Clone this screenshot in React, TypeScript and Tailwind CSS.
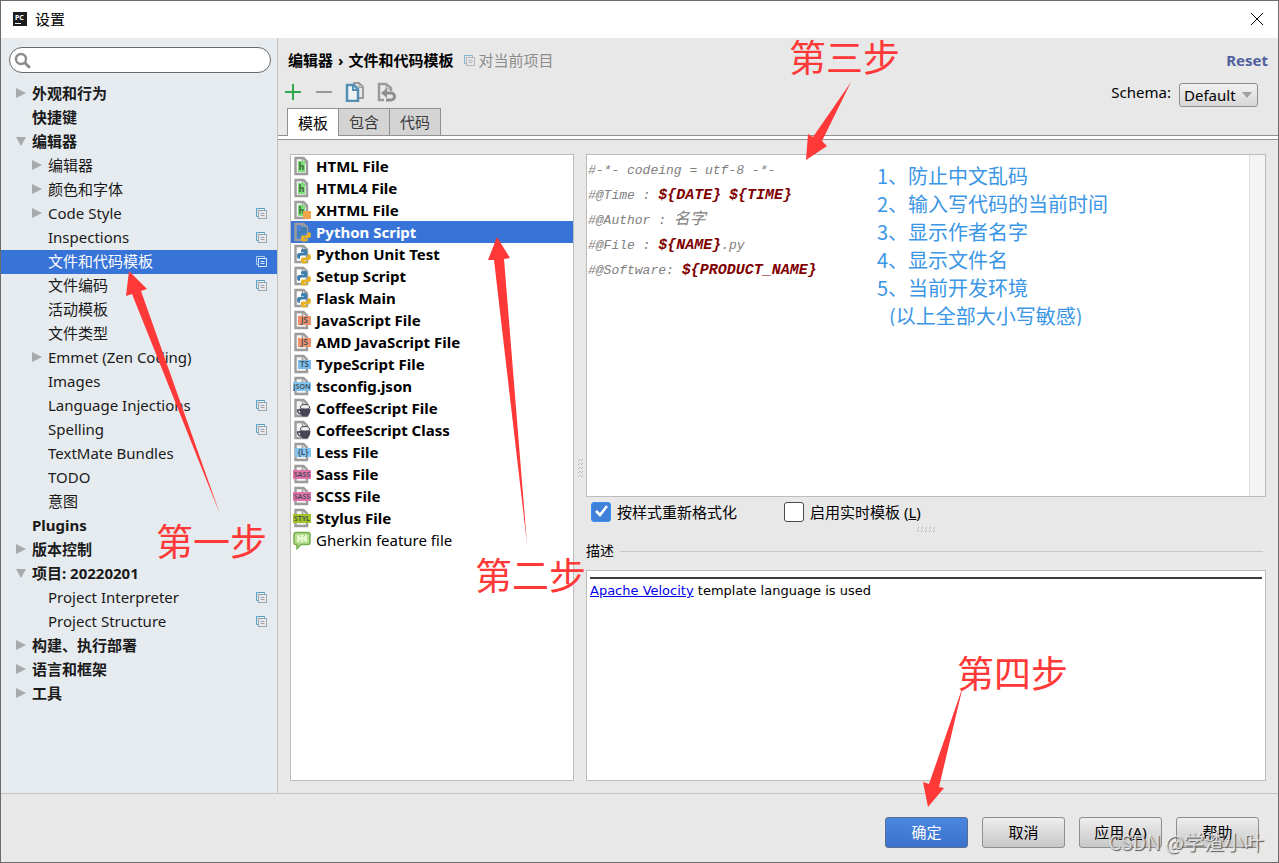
import type { ReactNode } from "react";
import { clsx } from "clsx";

type TreeItem = {
  label: string;
  level: 0 | 1;
  arrow?: "open" | "closed";
  bold?: boolean;
  project?: boolean;
  selected?: boolean;
};

const TREE: TreeItem[] = [
  { label: "外观和行为", level: 0, arrow: "closed", bold: true },
  { label: "快捷键", level: 0, bold: true },
  { label: "编辑器", level: 0, arrow: "open", bold: true },
  { label: "编辑器", level: 1, arrow: "closed" },
  { label: "颜色和字体", level: 1, arrow: "closed" },
  { label: "Code Style", level: 1, arrow: "closed", project: true },
  { label: "Inspections", level: 1, project: true },
  { label: "文件和代码模板", level: 1, project: true, selected: true },
  { label: "文件编码", level: 1, project: true },
  { label: "活动模板", level: 1 },
  { label: "文件类型", level: 1 },
  { label: "Emmet (Zen Coding)", level: 1, arrow: "closed" },
  { label: "Images", level: 1 },
  { label: "Language Injections", level: 1, project: true },
  { label: "Spelling", level: 1, project: true },
  { label: "TextMate Bundles", level: 1 },
  { label: "TODO", level: 1 },
  { label: "意图", level: 1 },
  { label: "Plugins", level: 0, bold: true },
  { label: "版本控制", level: 0, arrow: "closed", bold: true },
  { label: "项目: 20220201", level: 0, arrow: "open", bold: true },
  { label: "Project Interpreter", level: 1, project: true },
  { label: "Project Structure", level: 1, project: true },
  { label: "构建、执行部署", level: 0, arrow: "closed", bold: true },
  { label: "语言和框架", level: 0, arrow: "closed", bold: true },
  { label: "工具", level: 0, arrow: "closed", bold: true },
];

type FileKind =
  | "html"
  | "xhtml"
  | "python"
  | "js"
  | "ts"
  | "json"
  | "coffee"
  | "less"
  | "sass"
  | "styl"
  | "gherkin";

const TEMPLATES: { name: string; kind: FileKind }[] = [
  { name: "HTML File", kind: "html" },
  { name: "HTML4 File", kind: "html" },
  { name: "XHTML File", kind: "xhtml" },
  { name: "Python Script", kind: "python" },
  { name: "Python Unit Test", kind: "python" },
  { name: "Setup Script", kind: "python" },
  { name: "Flask Main", kind: "python" },
  { name: "JavaScript File", kind: "js" },
  { name: "AMD JavaScript File", kind: "js" },
  { name: "TypeScript File", kind: "ts" },
  { name: "tsconfig.json", kind: "json" },
  { name: "CoffeeScript File", kind: "coffee" },
  { name: "CoffeeScript Class", kind: "coffee" },
  { name: "Less File", kind: "less" },
  { name: "Sass File", kind: "sass" },
  { name: "SCSS File", kind: "sass" },
  { name: "Stylus File", kind: "styl" },
  { name: "Gherkin feature file", kind: "gherkin" },
];

export default function App() {
  return (
    <div className="relative flex h-screen flex-col overflow-hidden border border-[#6b6b6b] bg-[#e8e8e8] font-['Noto_Sans','Noto_Sans_CJK_SC',sans-serif] text-[15px] leading-5 text-black">
      <TitleBar />
      <div className="flex min-h-0 flex-1">
        <Sidebar />
        <MainPanel />
      </div>
      <Footer />
      <Annotations />
    </div>
  );
}

function TitleBar() {
  return (
    <header className="flex h-[37px] shrink-0 items-center bg-white pb-px pl-3 pr-[11px]">
      <svg width="14" height="14" viewBox="0 0 14 14" aria-hidden="true">
        <rect width="14" height="14" fill="#1d1d1d" />
        <text x="2" y="8" fontSize="7" fontWeight="700" fontFamily="Noto Sans" fill="#fff">
          PC
        </text>
        <path d="M2 11.5h6" stroke="#fff" />
      </svg>
      <h1 className="ml-2 text-[15px]">设置</h1>
      <button type="button" aria-label="关闭" className="ml-auto flex size-5 items-center justify-center">
        <svg width="12" height="12" viewBox="0 0 12 12" stroke="#000" aria-hidden="true">
          <path d="M0 0l12 12M12 0L0 12" />
        </svg>
      </button>
    </header>
  );
}

function Sidebar() {
  return (
    <nav className="flex w-[277px] shrink-0 flex-col border-r border-[#c3c3c3] bg-[#e6ebef]">
      <label className="mb-[9px] ml-2 mr-1.5 mt-[9px] flex h-[26px] items-center rounded-full border border-[#6a6a6a] bg-white pl-1">
        <svg width="17" height="17" viewBox="0 0 17 17" fill="none" stroke="#8c8c8c" aria-hidden="true">
          <circle cx="7" cy="7" r="5" strokeWidth="2.4" />
          <path d="M10.8 10.8l5 5" strokeWidth="3" />
        </svg>
        <input type="text" aria-label="搜索" className="min-w-0 flex-1 bg-transparent px-1 outline-none" />
      </label>
      <ul>
        {TREE.map((item, i) => (
          <TreeRow key={i} item={item} />
        ))}
      </ul>
    </nav>
  );
}

function TreeRow({ item }: { item: TreeItem }) {
  return (
    <li
      className={clsx(
        "flex h-6 items-center pb-0.5 pr-2.5",
        item.level === 0 ? "pl-[15px]" : "pl-[31px]",
        item.bold && "font-bold",
        item.selected ? "bg-[#3874d8] text-white" : "text-[#1a1a1a]",
      )}
    >
      <span className="w-4 shrink-0">
        {item.arrow && (
          <svg width="10" height="10" viewBox="0 0 10 10" fill="#a9a9a9" aria-hidden="true">
            <path d={item.arrow === "open" ? "M0 1h10L5 10z" : "M0 0l10 5-10 5z"} />
          </svg>
        )}
      </span>
      <span className="flex-1 whitespace-nowrap">{item.label}</span>
      {item.project && <ProjectIcon selected={item.selected} />}
    </li>
  );
}

function ProjectIcon({ selected }: { selected?: boolean }) {
  const back = selected ? "#a9cdf0" : "#5b9fc9";
  const front = selected ? "#dbe6f5" : "#a0a4a8";
  return (
    <svg width="11" height="11" viewBox="0 0 11 11" fill="none" aria-hidden="true">
      <path d="M2 8.500H.5v-8h8V2" stroke={back} />
      <rect x="2.500" y="2.500" width="8" height="8" stroke={front} />
      <path d="M4.500 5.500h4M4.500 7.500h4" stroke={front} />
    </svg>
  );
}

function MainPanel() {
  return (
    <main className="flex min-w-0 flex-1 flex-col">
      <div className="flex h-11 items-center pl-2.5 pr-2.5">
        <h2 className="flex gap-[5px] whitespace-nowrap font-bold">
          <span>编辑器</span>
          <span>›</span>
          <span>文件和代码模板</span>
        </h2>
        <span className="ml-2.5 mr-1 opacity-70">
          <ProjectIcon />
        </span>
        <span className="whitespace-nowrap text-[#8c8c8c]">对当前项目</span>
        <a href="#reset" className="ml-auto font-bold text-[#515f9f]">
          Reset
        </a>
      </div>
      <div className="flex h-[26px] items-start pr-5">
        <Toolbar />
        <label htmlFor="schema" className="ml-auto mr-2">
          Schema:
        </label>
        <div className="relative pt-px">
          <select
            id="schema"
            className="h-6 w-[79px] appearance-none rounded-[3px] border border-[#8e8e8e] bg-linear-to-b from-[#f2f2f2] to-[#d6d6d6] pl-1 text-[15px] leading-5"
          >
            <option>Default</option>
          </select>
          <svg className="pointer-events-none absolute right-1.5 top-2.5" width="10" height="6" fill="#a0a0a0" aria-hidden="true">
            <path d="M0 0h10L5 6z" />
          </svg>
        </div>
      </div>
      <Tabs />
      <div className="flex min-h-0 flex-1 pb-3 pl-3 pr-3 pt-3.5">
        <TemplateList />
        <div className="flex w-3 shrink-0 items-center justify-center">
          <svg width="5" height="18" viewBox="0 0 5 18" fill="none" stroke="#b4b4b4" aria-hidden="true">
            <path d="M0 2l2-2M3 2l2-2M0 6l2-2M3 6l2-2M0 10l2-2M3 10l2-2M0 14l2-2M3 14l2-2M0 18l2-2M3 18l2-2" />
          </svg>
        </div>
        <EditorColumn />
      </div>
    </main>
  );
}

function Toolbar() {
  return (
    <div className="flex gap-2.5 pl-1">
      <ToolButton label="添加">
        <path d="M3 10h16M11 2v16" stroke="#2fa84f" strokeWidth="2" />
      </ToolButton>
      <ToolButton label="删除">
        <path d="M3 10h16" stroke="#9a9a9a" strokeWidth="2" />
      </ToolButton>
      <ToolButton label="复制">
        <path d="M9 1h6l4 4v11h-4" stroke="#9b9b9b" strokeWidth="2" />
        <path d="M15 1v4.500h4" stroke="#9b9b9b" />
        <path d="M3 3h7l4 4v12H3z" fill="#eef2f4" stroke="#5490b4" strokeWidth="2.500" />
        <path d="M9 3v5h5" stroke="#5490b4" strokeWidth="2" />
      </ToolButton>
      <ToolButton label="重置">
        <path d="M9 18H4V2h7l5 4v3" stroke="#9a9a9a" strokeWidth="2.500" />
        <path d="M11 2v5h5" stroke="#9a9a9a" />
        <path d="M6 11l6-5v10z" fill="#8e8e8e" />
        <path d="M10 11h6a3.500 3.500 0 010 7h-5" stroke="#8e8e8e" strokeWidth="3" />
      </ToolButton>
    </div>
  );
}

function ToolButton({ label, children }: { label: string; children: ReactNode }) {
  return (
    <button type="button" aria-label={label} className="flex h-5 w-[21px]">
      <svg width="21" height="20" viewBox="0 0 21 20" fill="none" aria-hidden="true">
        {children}
      </svg>
    </button>
  );
}

function Tabs() {
  return (
    <div className="border-b border-[#919191] bg-white pb-[3px]">
      <div role="tablist" className="flex items-end border-b border-[#919191] bg-[#e8e8e8] pl-[9px]">
        {["模板", "包含", "代码"].map((tab, i) => (
          <button
            key={tab}
            type="button"
            role="tab"
            aria-selected={i === 0}
            className={clsx(
              "border-t border-[#919191] px-2.5",
              i === 0 ? "-mb-px h-7 border-x bg-white" : "h-[27px] border-r bg-[#d4d4d4] text-[#3a3a3a]",
            )}
          >
            {tab}
          </button>
        ))}
      </div>
    </div>
  );
}

function TemplateList() {
  return (
    <ul className="w-[284px] shrink-0 border border-[#bcbcbc] bg-white">
      {TEMPLATES.map(({ name, kind }) => (
        <li
          key={name}
          className={clsx(
            "flex h-[22px] items-center gap-[5px] pl-0.5",
            kind !== "gherkin" && "font-bold",
            name === "Python Script" && "bg-[#3874d8] text-white",
          )}
        >
          <FileIcon kind={kind} />
          {name}
        </li>
      ))}
    </ul>
  );
}

const BADGES: Partial<Record<FileKind, { text: string; x: number; fill: string }>> = {
  js: { text: "JS", x: 5, fill: "#f0926b" },
  ts: { text: "TS", x: 5, fill: "#7dbcec" },
  json: { text: "JSON", x: 0, fill: "#82c4f0" },
  less: { text: "{L}", x: 2, fill: "#82c4f0" },
  sass: { text: "SASS", x: 0, fill: "#e573ab" },
  styl: { text: "STYL", x: 0, fill: "#a3c429" },
};

function FileIcon({ kind }: { kind: FileKind }) {
  if (kind === "gherkin") {
    return (
      <svg width="18" height="19" viewBox="0 0 18 19" aria-hidden="true">
        <path
          d="M3 1.500h12a2 2 0 012 2v8a2 2 0 01-2 2H8l-4 4v-4H3a2 2 0 01-2-2v-8a2 2 0 012-2z"
          fill="#b4dc8c"
          stroke="#76ad4b"
          strokeWidth="1.500"
        />
        <rect x="4" y="4" width="10" height="7" fill="#e4f7cd" />
        <path d="M6 4l2 2M12 4l-2 2M6 11l2-2M12 11l-2-2" stroke="#a8d47d" />
      </svg>
    );
  }
  const badge = BADGES[kind];
  return (
    <svg width="18" height="20" viewBox="0 0 18 20" aria-hidden="true">
      <path
        d="M2.500 2h8l3.500 3.500V18H2.500z"
        fill="#f4f4f4"
        fillOpacity={kind === "python" ? 0.1 : 1}
        stroke="#9c9c9c"
        strokeWidth="2.400"
      />
      <path d="M9.500 2v4.500H14" fill="none" stroke="#9c9c9c" strokeWidth="1.500" />
      {badge && (
        <>
          <rect x={badge.x} y="6" width={18 - badge.x} height="9" fill={badge.fill} />
          <text
            x={(18 + badge.x) / 2}
            y="13"
            textAnchor="middle"
            fontSize={badge.text.length > 3 ? 7 : 8}
            fontWeight="600"
            fontFamily="Noto Sans"
            fill="#3f4a52"
          >
            {badge.text}
          </text>
        </>
      )}
      {(kind === "html" || kind === "xhtml") && (
        <>
          <rect x="5" y="5" width="7" height="11" fill="#7fe07a" />
          <path d="M7 6v8M7 10h3v4" fill="none" stroke="#3d6b3d" strokeWidth="1.500" />
        </>
      )}
      {kind === "xhtml" && <rect x="10" y="11" width="8" height="8" fill="#f2a44c" />}
      {kind === "python" && (
        <>
          <path
            d="M8 6.500c0-1 1-1.500 3-1.500s3 .5 3 1.800v3c0 1-.6 1.700-1.700 1.700H8.700c-1.200 0-1.700.8-1.700 2v1.300H5.800C4.500 14.800 4 13.500 4 12s.6-2.900 2-2.900h5V8.400H8z"
            fill="#3f7fb0"
          />
          <path
            d="M14 18c0 1-1 1.500-3 1.500s-3-.6-3-1.800v-2.500c0-1 .6-1.700 1.700-1.700h3.600c1.200 0 1.700-.8 1.700-2v-1.300h1.200c1.300 0 1.800 1.200 1.800 2.800s-.6 3-2 3h-5v.8h3z"
            fill="#e6b422"
          />
        </>
      )}
      {kind === "coffee" && (
        <>
          <ellipse cx="12" cy="9" rx="4.500" ry="2.500" fill="#efefef" stroke="#4a4a58" />
          <path d="M6.500 10.500h11c0 4-1.500 7-3.500 8h-4c-2-1-3.500-4-3.500-8z" fill="#454555" />
          <path d="M7 12H4.500c0 2.500 1.500 4 4 4" fill="none" stroke="#454555" strokeWidth="1.300" />
        </>
      )}
    </svg>
  );
}

function EditorColumn() {
  return (
    <section className="flex min-w-0 flex-1 flex-col">
      <div className="flex min-h-0 flex-[341] border border-[#bcbcbc] bg-white">
        <Code />
        <div className="w-4 border-l border-[#dedede] bg-[#f4f4f4]" />
      </div>
      <div className="flex h-[30px] shrink-0 items-center gap-[47px] pb-px pl-[5px]">
        <label className="flex items-center gap-1.5">
          <CheckBox defaultChecked />
          按样式重新格式化
        </label>
        <label className="flex items-center gap-1.5">
          <CheckBox />
          <span>
            启用实时模板 (<u>L</u>)
          </span>
        </label>
      </div>
      <svg className="shrink-0 self-center" width="18" height="5" viewBox="0 0 18 5" fill="none" stroke="#b4b4b4" aria-hidden="true">
        <path d="M0 2l2-2M4 2l2-2M8 2l2-2M12 2l2-2M16 2l2-2M0 5l2-2M4 5l2-2M8 5l2-2M12 5l2-2M16 5l2-2" />
      </svg>
      <div className="flex h-[38px] shrink-0 items-center gap-1.5 pr-[3px]">
        <h3 className="text-sm">描述</h3>
        <hr className="flex-1 border-[#c8c8c8]" />
      </div>
      <div className="min-h-0 flex-[203] border border-[#bcbcbc] bg-white px-[3px] pt-1.5 font-['DejaVu_Sans',sans-serif] text-[13px] leading-5">
        <hr className="border-t-2 border-[#3c3c3c]" />
        <p className="pt-0.5">
          <a href="#velocity" className="text-[#0000ee] underline">
            Apache Velocity
          </a>{" "}
          template language is used
        </p>
      </div>
    </section>
  );
}

function CheckBox({ defaultChecked }: { defaultChecked?: boolean }) {
  return (
    <span className="relative flex">
      <input
        type="checkbox"
        defaultChecked={defaultChecked}
        className="peer size-5 appearance-none rounded-[3px] border border-[#4a4a4a] bg-white checked:border-[#3a8ff0] checked:bg-[#4080d8]"
      />
      <svg
        className="pointer-events-none absolute inset-0 hidden peer-checked:block"
        width="20"
        height="20"
        fill="none"
        stroke="#fff"
        strokeWidth="2.500"
        aria-hidden="true"
      >
        <path d="M5 9l4 4 7-9" />
      </svg>
    </span>
  );
}

function Code() {
  return (
    <div className="min-w-0 flex-1 whitespace-pre pl-px pt-[3px] font-['Liberation_Mono','Noto_Sans_CJK_SC',monospace] text-[13px] italic text-[#808080]">
      <CodeLine>#-*- codeing = utf-8 -*-</CodeLine>
      <CodeLine>
        {"#@Time : "}
        <Variable name="DATE" /> <Variable name="TIME" />
      </CodeLine>
      <CodeLine>
        {"#@Author : "}
        <span className="text-base leading-5">名字</span>
      </CodeLine>
      <CodeLine>
        {"#@File : "}
        <Variable name="NAME" />
        .py
      </CodeLine>
      <CodeLine>
        {"#@Software: "}
        <Variable name="PRODUCT_NAME" />
      </CodeLine>
    </div>
  );
}

function CodeLine({ children }: { children: ReactNode }) {
  return <div className="h-[25px] leading-[25px]">{children}</div>;
}

function Variable({ name }: { name: string }) {
  return <b className="text-[15px] leading-5 text-[#800000]">{"${" + name + "}"}</b>;
}

function Footer() {
  return (
    <footer className="flex h-[69px] shrink-0 items-center justify-end gap-3.5 border-t border-[#c3c3c3] pr-[19px] pt-2">
      <button
        type="submit"
        className="h-[31px] w-[83px] rounded-[3px] border border-[#5a6f94] bg-linear-to-b from-[#4b86e0] to-[#3b72cc] text-white"
      >
        确定
      </button>
      {["取消", "应用 (A)", "帮助"].map((label) => (
        <button
          key={label}
          type="button"
          className="h-[31px] w-[83px] rounded-[3px] border border-[#8e8e8e] bg-linear-to-b from-[#eeeeee] to-[#c8c8c8]"
        >
          {label === "应用 (A)" ? (
            <>
              应用 (<u>A</u>)
            </>
          ) : (
            label
          )}
        </button>
      ))}
    </footer>
  );
}

// Hand-made notes drawn on top of the window.
function Annotations() {
  return (
    <div className="pointer-events-none absolute inset-0 font-['Noto_Sans_CJK_SC',sans-serif] text-[37px] leading-10 text-[#ff3838]">
      <svg className="absolute left-0 top-0" width="1277" height="861" viewBox="1 1 1277 861" fill="#ff3838" aria-hidden="true">
        <path d="M129 271l18 18-6 2 79 223-88-220-6 2z" />
        <path d="M497 237l13 21-6 1 23 285-33-284-6 0z" />
        <path d="M806 160l2-26 5 3 38-55-29 59 5 5z" />
        <path d="M928 807l-5-25 6 2 34-98-24 101 5 1z" />
      </svg>
      <span className="absolute left-[155px] top-[519px]">第一步</span>
      <span className="absolute left-[474px] top-[553px]">第二步</span>
      <span className="absolute left-[788px] top-[35px]">第三步</span>
      <span className="absolute left-[956px] top-[651px]">第四步</span>
      <ol className="absolute left-[876px] top-[161px] text-xl leading-7 text-[#3b96e6]">
        <li>1、防止中文乱码</li>
        <li>2、输入写代码的当前时间</li>
        <li>3、显示作者名字</li>
        <li>4、显示文件名</li>
        <li>5、当前开发环境</li>
        <li className="h-6 overflow-hidden pl-3">(以上全部大小写敏感)</li>
      </ol>
      <span className="absolute bottom-2 right-3.5 text-xl leading-6 text-[#f0f0f0]/80 [text-shadow:1px_1px_1px_#555]">
        CSDN @学渣小叶
      </span>
    </div>
  );
}
